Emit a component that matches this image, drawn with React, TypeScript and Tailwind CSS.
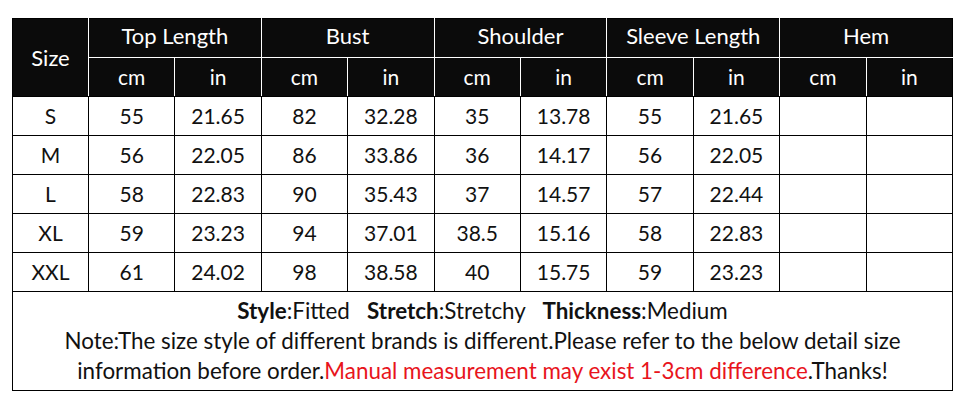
const rows = [
  ["S", "55", "21.65", "82", "32.28", "35", "13.78", "55", "21.65", "", ""],
  ["M", "56", "22.05", "86", "33.86", "36", "14.17", "56", "22.05", "", ""],
  ["L", "58", "22.83", "90", "35.43", "37", "14.57", "57", "22.44", "", ""],
  ["XL", "59", "23.23", "94", "37.01", "38.5", "15.16", "58", "22.83", "", ""],
  ["XXL", "61", "24.02", "98", "38.58", "40", "15.75", "59", "23.23", "", ""],
];

const groups = ["Top Length", "Bust", "Shoulder", "Sleeve Length", "Hem"];

export default function App() {
  return (
    <div className="w-[960px] h-[412px] bg-white pt-[18px] pl-[12px] font-['Lato','Open_Sans',sans-serif]">
      <table className="w-[941px] table-fixed border-collapse border border-black text-[21px] text-[#111]">
        <colgroup>
          <col className="w-[76px]" />
          {Array.from({ length: 10 }).map((_, i) => (
            <col key={i} />
          ))}
        </colgroup>
        <thead className="bg-[#0b0b0b] text-white">
          <tr className="h-[39px]">
            <th rowSpan={2} className="font-normal text-[22px] border-r border-white border-b border-b-black">
              Size
            </th>
            {groups.map((g, i) => (
              <th
                key={g}
                colSpan={2}
                className={`font-normal text-[22px] pb-[5px] border-b border-white ${i < 4 ? "border-r" : ""}`}
              >
                {g}
              </th>
            ))}
          </tr>
          <tr className="h-[39px]">
            {groups.flatMap((g, i) => [
              <th key={g + "cm"} className="font-normal border-r border-white border-b border-b-black">
                cm
              </th>,
              <th
                key={g + "in"}
                className={`font-normal border-b border-b-black ${i < 4 ? "border-r border-white" : ""}`}
              >
                in
              </th>,
            ])}
          </tr>
        </thead>
        <tbody>
          {rows.map((r) => (
            <tr key={r[0]} className="h-[39px]">
              {r.map((c, j) => (
                <td key={j} className="border border-black text-center p-0">
                  {c}
                </td>
              ))}
            </tr>
          ))}
          <tr>
            <td colSpan={11} className="border border-black text-center h-[99px] p-0 text-[22.4px] leading-[30px]">
              <div>
                <b>Style</b>:Fitted&nbsp;&nbsp;&nbsp;<b>Stretch</b>:Stretchy&nbsp;&nbsp;&nbsp;<b>Thickness</b>:Medium
              </div>
              <div>
                Note:The size style of different brands is different.Please refer to the below detail size
              </div>
              <div>
                information before order.
                <span className="text-[#e8141c]">Manual measurement may exist 1-3cm difference</span>.Thanks!
              </div>
            </td>
          </tr>
        </tbody>
      </table>
    </div>
  );
}
